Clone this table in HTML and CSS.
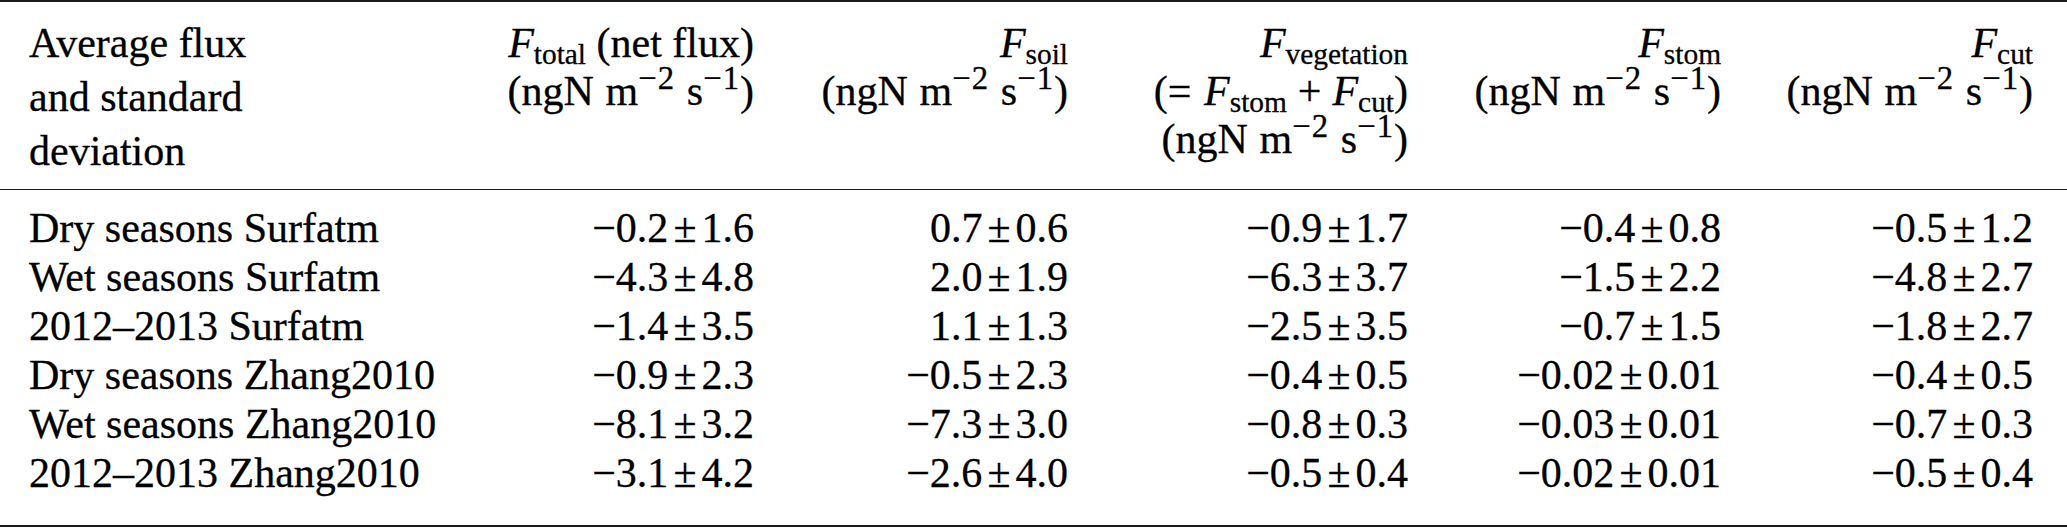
FILE: index.html
```html
<!doctype html>
<html lang="en">
<head>
    <meta charset="UTF-8">
    <title>Average flux and standard deviation</title>
    <link rel="stylesheet" href="styles.css">
</head>
<body>
    <table class="flux-table">
        <thead>
            <tr>
                <th class="label">Average flux<br>and standard<br>deviation</th>
                <th><i>F</i><sub>total</sub> (net flux)<br><span class="unit">(ngN m<sup>&minus;2</sup> s<sup>&minus;1</sup>)</span></th>
                <th><i>F</i><sub>soil</sub><br><span class="unit">(ngN m<sup>&minus;2</sup> s<sup>&minus;1</sup>)</span></th>
                <th><i>F</i><sub>vegetation</sub><br>(<span class="rel">=</span><i>F</i><sub>stom</sub><span class="bin">+</span><i>F</i><sub>cut</sub>)<br><span class="unit">(ngN m<sup>&minus;2</sup> s<sup>&minus;1</sup>)</span></th>
                <th><i>F</i><sub>stom</sub><br><span class="unit">(ngN m<sup>&minus;2</sup> s<sup>&minus;1</sup>)</span></th>
                <th><i>F</i><sub>cut</sub><br><span class="unit">(ngN m<sup>&minus;2</sup> s<sup>&minus;1</sup>)</span></th>
            </tr>
        </thead>
        <tbody>
            <tr>
                <td class="label">Dry seasons Surfatm</td>
                <td>&minus;0.2<span class="pm">&plusmn;</span>1.6</td>
                <td>0.7<span class="pm">&plusmn;</span>0.6</td>
                <td>&minus;0.9<span class="pm">&plusmn;</span>1.7</td>
                <td>&minus;0.4<span class="pm">&plusmn;</span>0.8</td>
                <td>&minus;0.5<span class="pm">&plusmn;</span>1.2</td>
            </tr>
            <tr>
                <td class="label">Wet seasons Surfatm</td>
                <td>&minus;4.3<span class="pm">&plusmn;</span>4.8</td>
                <td>2.0<span class="pm">&plusmn;</span>1.9</td>
                <td>&minus;6.3<span class="pm">&plusmn;</span>3.7</td>
                <td>&minus;1.5<span class="pm">&plusmn;</span>2.2</td>
                <td>&minus;4.8<span class="pm">&plusmn;</span>2.7</td>
            </tr>
            <tr>
                <td class="label">2012&ndash;2013 Surfatm</td>
                <td>&minus;1.4<span class="pm">&plusmn;</span>3.5</td>
                <td>1.1<span class="pm">&plusmn;</span>1.3</td>
                <td>&minus;2.5<span class="pm">&plusmn;</span>3.5</td>
                <td>&minus;0.7<span class="pm">&plusmn;</span>1.5</td>
                <td>&minus;1.8<span class="pm">&plusmn;</span>2.7</td>
            </tr>
            <tr>
                <td class="label">Dry seasons Zhang2010</td>
                <td>&minus;0.9<span class="pm">&plusmn;</span>2.3</td>
                <td>&minus;0.5<span class="pm">&plusmn;</span>2.3</td>
                <td>&minus;0.4<span class="pm">&plusmn;</span>0.5</td>
                <td>&minus;0.02<span class="pm">&plusmn;</span>0.01</td>
                <td>&minus;0.4<span class="pm">&plusmn;</span>0.5</td>
            </tr>
            <tr>
                <td class="label">Wet seasons Zhang2010</td>
                <td>&minus;8.1<span class="pm">&plusmn;</span>3.2</td>
                <td>&minus;7.3<span class="pm">&plusmn;</span>3.0</td>
                <td>&minus;0.8<span class="pm">&plusmn;</span>0.3</td>
                <td>&minus;0.03<span class="pm">&plusmn;</span>0.01</td>
                <td>&minus;0.7<span class="pm">&plusmn;</span>0.3</td>
            </tr>
            <tr>
                <td class="label">2012&ndash;2013 Zhang2010</td>
                <td>&minus;3.1<span class="pm">&plusmn;</span>4.2</td>
                <td>&minus;2.6<span class="pm">&plusmn;</span>4.0</td>
                <td>&minus;0.5<span class="pm">&plusmn;</span>0.4</td>
                <td>&minus;0.02<span class="pm">&plusmn;</span>0.01</td>
                <td>&minus;0.5<span class="pm">&plusmn;</span>0.4</td>
            </tr>
        </tbody>
    </table>
</body>
</html>
```

FILE: styles.css
```css
body {
    margin: 0;
    background: #fff;
}

.flux-table {
    width: 100%;
    table-layout: fixed;
    border-collapse: collapse;
    border-top: 2px solid #1a1a1a;
    border-bottom: 2px solid #1a1a1a;

    font-family: "Liberation Serif", "Times New Roman", serif;
    font-size: 42px;
    line-height: 48px;
    color: #000;
    /* the printed table has slightly heavier strokes */
    -webkit-text-stroke: 0.3px #000;
}

.flux-table th,
.flux-table td {
    box-sizing: border-box;
    padding: 0;
    text-align: right;
    white-space: nowrap;
}

.flux-table th {
    /* header cells all hang from the top rule */
    vertical-align: top;
    font-weight: normal;
    padding-top: 17px;
    padding-bottom: 26px;
}

.flux-table thead tr {
    border-bottom: 1.5px solid #1a1a1a;
}

.flux-table .label {
    padding-left: 29px;
    text-align: left;
}

/* the stub header is a parbox, its lines sit further apart */
.flux-table th.label {
    line-height: 54px;
    padding-top: 14px;
    padding-bottom: 11px;
}

.flux-table td {
    line-height: 49px;
}

/* column widths, right edges follow the printed table */
.flux-table th:nth-child(1) { width: 440px; }
.flux-table th:nth-child(2) { width: 314px; }
.flux-table th:nth-child(3) { width: 314px; }
.flux-table th:nth-child(4) { width: 340px; }
.flux-table th:nth-child(5) { width: 313px; }
.flux-table th:nth-child(6) { width: 346px; }

.flux-table th:last-child,
.flux-table td:last-child {
    padding-right: 34px;
}

.flux-table tbody tr:first-child td {
    padding-top: 14px;
}

.flux-table tbody tr:last-child td {
    padding-bottom: 27px;
}

.flux-table i {
    font-style: italic;
}

/* math spacing round relations and binary operators */
.flux-table .rel {
    margin-right: 0.3em;
}

.flux-table .bin {
    margin: 0 0.26em;
}

.flux-table .pm {
    margin: 0 0.12em;
}

.flux-table .unit {
    word-spacing: 0.03em;
}

.flux-table sub,
.flux-table sup {
    line-height: 0;
}

.flux-table sub {
    font-size: 0.7em;
    vertical-align: -0.25em;
}

.flux-table sup {
    font-size: 0.78em;
    vertical-align: 0.5em;
    letter-spacing: 0.03em;
}
```
